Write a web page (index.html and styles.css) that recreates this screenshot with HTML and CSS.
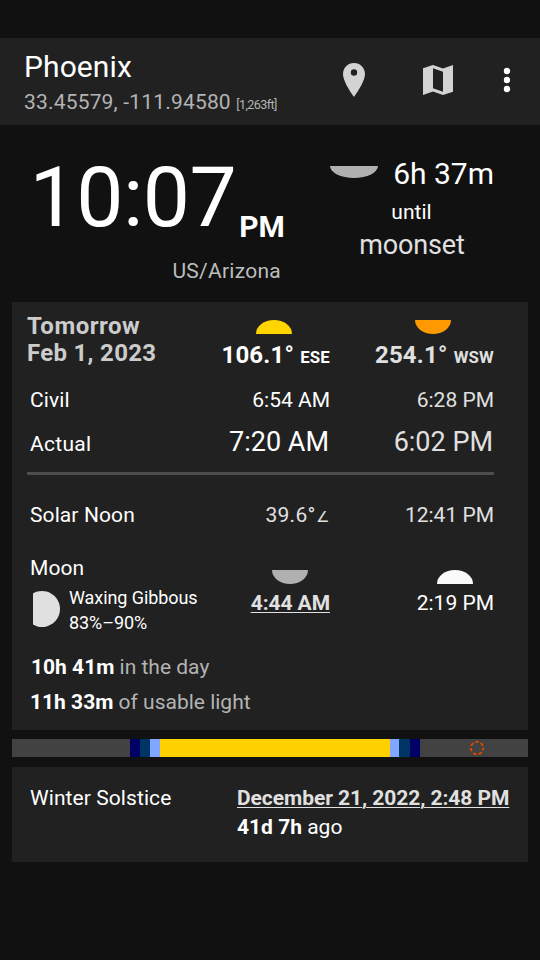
FILE: index.html
```
<!DOCTYPE html>
<html lang="en">
<head>
<meta charset="utf-8">
<title>Phoenix</title>
<link rel="stylesheet" href="styles.css">
</head>
<body>
<header class="appbar">
  <div class="place">
    <div class="city">Phoenix</div>
    <div class="coords">33.45579, -111.94580 <span class="alt">[1,263ft]</span></div>
  </div>
  <svg class="pin" width="22" height="34" viewBox="0 0 22 34"><path fill="#d3d3d3" fill-rule="evenodd" d="M11 0C4.900 0 0 4.900 0 11C0 19.200 11 34 11 34S22 19.200 22 11C22 4.900 17.100 0 11 0ZM11 6.300A3.200 3.200 0 1 1 11 12.700A3.200 3.200 0 1 1 11 6.300Z"/></svg>
  <svg class="map" width="30" height="30" viewBox="0 0 30 30"><path fill="#d3d3d3" fill-rule="evenodd" d="M0 3.200L10 0L20 3.500L30 0V26.800L20 30L10 26.500L0 30ZM10 3.300V23.200L20 26.700V6.800Z"/></svg>
  <svg class="dots" width="8" height="26" viewBox="0 0 8 26" fill="#fff"><circle cx="4" cy="4" r="3.200"/><circle cx="4" cy="13" r="3.200"/><circle cx="4" cy="22" r="3.200"/></svg>
</header>

<section class="hero">
  <div class="clock">
    <div class="now"><span class="time">10:07</span><span class="ampm">PM</span></div>
    <div class="zone">US/Arizona</div>
  </div>
  <div class="next">
    <div class="remain"><span class="dome down big silver"></span><span class="dur">6h 37m</span></div>
    <div class="until">until</div>
    <div class="event">moonset</div>
  </div>
</section>

<main class="card day">
  <div class="row head">
    <div class="date"><span class="word">Tomorrow</span><br>Feb 1, 2023</div>
    <div class="cell rise"><span class="dome up gold"></span><b class="az">106.1° <small>ESE</small></b></div>
    <div class="cell set dim"><span class="dome down orange"></span><b class="az">254.1° <small>WSW</small></b></div>
  </div>
  <div class="row civil"><div class="label">Civil</div><div class="cell">6:54 AM</div><div class="cell dim">6:28 PM</div></div>
  <div class="row actual"><div class="label">Actual</div><div class="cell">7:20 AM</div><div class="cell dim">6:02 PM</div></div>
  <div class="rule"></div>
  <div class="row noon"><div class="label">Solar Noon</div><div class="cell altitude dim">39.6°<span class="angle">∠</span></div><div class="cell dim">12:41 PM</div></div>
  <div class="row moon">
    <div class="label">
      <div>Moon</div>
      <div class="phase">
        <svg width="27" height="36" viewBox="0 0 27 36"><path fill="#e0e0e0" d="M0 2.400A18 18 0 1 1 0 33.600Z"/></svg>
        <div class="phase-text">Waxing Gibbous<br>83%–90%</div>
      </div>
    </div>
    <div class="cell mset dim"><span class="dome down silver"></span><b class="link">4:44 AM</b></div>
    <div class="cell mrise"><span class="dome up white"></span><span>2:19 PM</span></div>
  </div>
  <div class="total first"><b>10h 41m</b> in the day</div>
  <div class="total"><b>11h 33m</b> of usable light</div>
</main>

<div class="lightmap">
  <i class="night evening"></i><i class="astro"></i><i class="nautic"></i><i class="civ"></i><i class="sun"></i><i class="civ short"></i><i class="nautic long"></i><i class="astro"></i>
  <i class="night rest"><svg width="16" height="16" viewBox="0 0 16 16"><circle cx="8" cy="8" r="6.200" fill="none" stroke="#d84a00" stroke-width="1.900" stroke-dasharray="3.600 1.965" stroke-dashoffset="1.200"/></svg></i>
</div>

<section class="card solstice">
  <div class="name">Winter Solstice</div>
  <div class="when"><b class="link">December 21, 2022, 2:48 PM</b><div class="ago"><b>41d 7h</b> ago</div></div>
</section>
</body>
</html>
```

FILE: styles.css
```
* { box-sizing: border-box; }
body {
  margin: 0;
  width: 540px;
  height: 960px;
  padding-top: 38px;
  overflow: hidden;
  background: #111;
  color: #fff;
  font: 21px/26px Roboto, sans-serif;
  white-space: nowrap;
}
svg, .dome { display: block; flex: none; }

.appbar {
  display: flex;
  align-items: flex-start;
  height: 87px;
  padding: 11px 0 0 24px;
  background: #212121;
}
.place { width: 319px; }
.city { font-size: 30px; line-height: 36px; letter-spacing: .1px; }
.coords { margin-top: 4px; color: #b3b3b3; letter-spacing: .18px; }
.alt { font-size: 12.6px; letter-spacing: -.6px; }
.pin { margin-top: 14px; }
.map { margin: 16px 0 0 58px; }
.dots { margin: 18px 0 0 50px; }

.hero { display: flex; height: 177px; padding-top: 30px; }
.clock { width: 285px; padding-left: 29.5px; }
.now { display: flex; align-items: flex-end; height: 90px; }
.time { font-size: 84px; line-height: 84px; margin-bottom: 5px; letter-spacing: -.5px; }
.ampm { font-size: 30px; line-height: 36px; font-weight: 700; margin-left: 3px; }
.zone { margin: 13px 4px 0 0; text-align: right; color: #bdbdbd; letter-spacing: .26px; }
.next { width: 164px; margin-left: 45px; text-align: center; }
.remain { display: flex; justify-content: space-between; height: 44px; }
.dur { font-size: 30px; line-height: 36px; margin-top: 1px; }
.until { padding-right: 1px; }
.event { margin-top: 4px; font-size: 27px; line-height: 32px; color: #e0e0e0; letter-spacing: -.15px; }

.dome { width: 36px; height: 14px; }
.up { border-radius: 18px 18px 0 0 / 14px 14px 0 0; }
.down { border-radius: 0 0 18px 18px / 0 0 14px 14px; }
.big { width: 48px; height: 12px; margin-top: 11px; border-radius: 0 0 24px 24px / 0 0 12px 12px; }
.silver { background: #b0b0b0; }
.gold { background: #ffd500; }
.orange { background: #ff9900; }
.white { background: #fafafa; }

.card { margin: 0 12px; background: #212121; }
.day { height: 428px; padding: 11px 34px 0 15px; }
.row { display: grid; grid-template-columns: 180px 123px 164px; }
.label { padding-left: 3px; letter-spacing: .1px; }
.cell { text-align: right; }
.dim { color: #e0e0e0; }
.date { font-size: 24px; line-height: 27px; font-weight: 700; color: #ccc; letter-spacing: .3px; }
.word { letter-spacing: .5px; }
.cell .dome { margin-left: auto; }
.head .dome { margin-top: 7px; }
.rise .dome { margin-right: 38px; }
.set .dome { margin-right: 43px; }
.az { display: block; margin-top: 7px; font-size: 24px; line-height: 28px; letter-spacing: .2px; }
.az small { font-size: 16.8px; }
.civil { margin-top: 16px; }
.actual { align-items: baseline; margin-top: 13px; }
.actual .label { letter-spacing: .3px; }
.actual .cell { padding-right: 1px; font-size: 27px; line-height: 32px; }
.rule { height: 3px; margin-top: 14px; background: #4d4d4d; }
.noon { margin-top: 27px; }
.altitude { padding-right: 1px; letter-spacing: .3px; }
.angle { font-size: 14.7px; }
.moon { margin-top: 25px; }
.phase { display: flex; gap: 9px; padding: 4px 0 0 3px; letter-spacing: 0; }
.phase svg { margin-top: 6px; }
.phase-text { font-size: 18px; line-height: 25px; letter-spacing: -.08px; }
.moon .dome { margin-top: 15px; margin-bottom: 6px; }
.mset .dome { margin-right: 22px; }
.mrise .dome { margin-right: 21px; }
.link { color: #e0e0e0; letter-spacing: -.06px; text-decoration: underline; text-decoration-thickness: 1px; text-underline-offset: 2px; }
.total { margin-top: 9px; padding-left: 3px; color: #b3b3b3; }
.total b, .ago b { color: #fff; }
.first { margin-top: 19px; padding-left: 4px; }

.lightmap { display: flex; height: 18px; margin: 9px 12px 10px; }
.lightmap i { width: 10px; }
.lightmap .night { background: #424242; }
.lightmap .evening { width: 118px; }
.lightmap .rest { width: 108px; padding: 1px 0 0 49px; }
.astro { background: #000066; }
.nautic { background: #003366; }
.civ { background: #80a6ff; }
.lightmap .sun { width: 230px; background: #ffd000; }
.lightmap .short { width: 9px; }
.lightmap .long { width: 11px; }

.solstice { display: flex; height: 95px; padding: 18px 0 0 18px; }
.name { width: 207px; letter-spacing: .08px; }
.ago { margin-top: 3px; }
```
